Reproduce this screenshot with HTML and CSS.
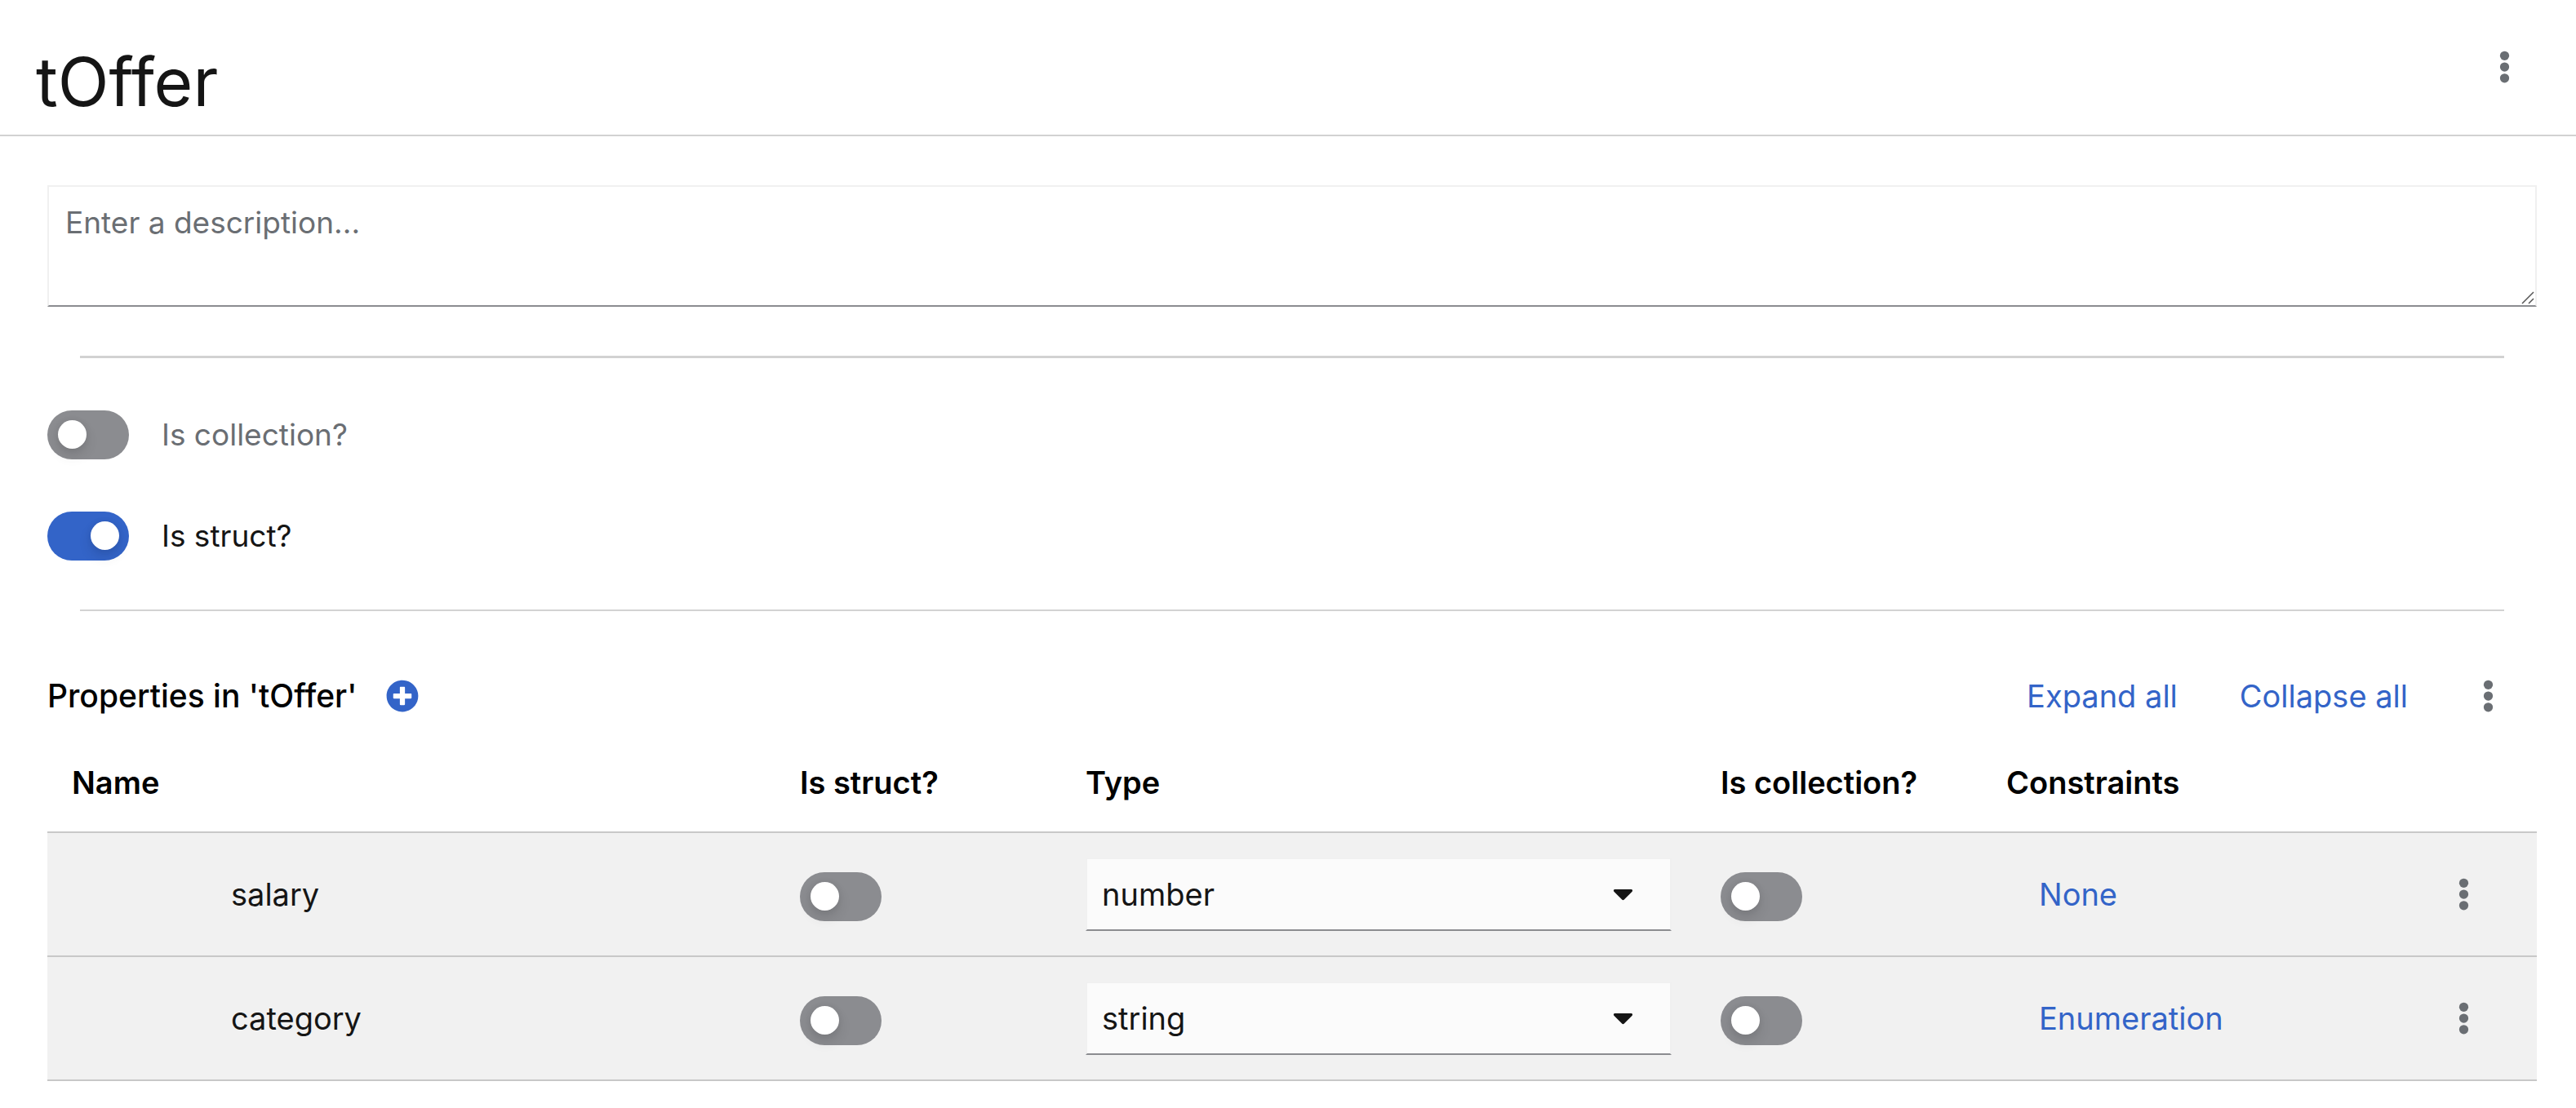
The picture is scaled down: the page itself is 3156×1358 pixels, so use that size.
FILE: index.html
```html
<!DOCTYPE html>
<html lang="en">
<head>
<meta charset="utf-8">
<meta name="viewport" content="width=device-width, initial-scale=1">
<title>tOffer</title>
<link rel="stylesheet" href="styles.css">
</head>
<body>
<svg class="sprite" aria-hidden="true">
  <symbol id="icon-kebab" viewBox="0 0 192 512">
    <circle cx="96" cy="80" r="72"/><circle cx="96" cy="256" r="72"/><circle cx="96" cy="432" r="72"/>
  </symbol>
  <symbol id="icon-caret" viewBox="0 0 320 512">
    <path d="M31.3 192h257.3c17.8 0 26.7 21.5 14.1 34.1L174.1 354.8c-7.8 7.8-20.5 7.8-28.3 0L17.2 226.1C4.6 213.5 13.5 192 31.3 192z"/>
  </symbol>
  <symbol id="icon-plus" viewBox="0 0 512 512">
    <path d="M256 8C119 8 8 119 8 256s111 248 248 248 248-111 248-248S393 8 256 8zm144 276c0 6.600-5.400 12-12 12h-92v92c0 6.600-5.400 12-12 12h-56c-6.600 0-12-5.400-12-12v-92h-92c-6.600 0-12-5.400-12-12v-56c0-6.600 5.400-12 12-12h92v-92c0-6.600 5.400-12 12-12h56c6.600 0 12 5.400 12 12v92h92c6.600 0 12 5.400 12 12v56z"/>
  </symbol>
</svg>

<header class="header">
  <h1 class="title">tOffer</h1>
  <button class="kebab" type="button" aria-label="Data type actions"><svg class="kebab-icon"><use href="#icon-kebab"/></svg></button>
</header>

<main class="content">
  <div class="description">
    <textarea class="description-input" aria-label="Description" placeholder="Enter a description..."></textarea>
    <svg class="grip" viewBox="0 0 16 16" aria-hidden="true"><path d="M1 15L15 1M9 15L15 9"/></svg>
  </div>

  <hr class="divider divider-strong">

  <div class="options">
    <label class="option"><input class="switch" type="checkbox" role="switch"><span>Is collection?</span></label>
    <label class="option"><input class="switch" type="checkbox" role="switch" checked><span>Is struct?</span></label>
  </div>

  <hr class="divider">

  <div class="toolbar">
    <h2 class="toolbar-title">Properties in 'tOffer'</h2>
    <button class="add" type="button" aria-label="Add property"><svg class="add-icon"><use href="#icon-plus"/></svg></button>
    <div class="toolbar-actions">
      <button class="link" type="button">Expand all</button>
      <button class="link" type="button">Collapse all</button>
    </div>
    <button class="kebab" type="button" aria-label="Properties actions"><svg class="kebab-icon"><use href="#icon-kebab"/></svg></button>
  </div>

  <table class="properties">
    <colgroup>
      <col><col class="col-toggle"><col class="col-type"><col class="col-toggle"><col class="col-constraints"><col class="col-actions">
    </colgroup>
    <thead>
      <tr><th>Name</th><th>Is struct?</th><th>Type</th><th>Is collection?</th><th>Constraints</th><td></td></tr>
    </thead>
    <tbody>
      <tr>
        <td class="name">salary</td>
        <td class="toggle"><input class="switch" type="checkbox" role="switch" aria-label="salary is struct"></td>
        <td><div class="select"><select class="select-input" aria-label="salary type"><option>number</option><option>string</option></select><svg class="select-caret"><use href="#icon-caret"/></svg></div></td>
        <td class="toggle"><input class="switch" type="checkbox" role="switch" aria-label="salary is collection"></td>
        <td><button class="link constraint" type="button">None</button></td>
        <td class="actions"><button class="kebab" type="button" aria-label="salary actions"><svg class="kebab-icon"><use href="#icon-kebab"/></svg></button></td>
      </tr>
      <tr>
        <td class="name">category</td>
        <td class="toggle"><input class="switch" type="checkbox" role="switch" aria-label="category is struct"></td>
        <td><div class="select"><select class="select-input" aria-label="category type"><option>string</option><option>number</option></select><svg class="select-caret"><use href="#icon-caret"/></svg></div></td>
        <td class="toggle"><input class="switch" type="checkbox" role="switch" aria-label="category is collection"></td>
        <td><button class="link constraint" type="button">Enumeration</button></td>
        <td class="actions"><button class="kebab" type="button" aria-label="category actions"><svg class="kebab-icon"><use href="#icon-kebab"/></svg></button></td>
      </tr>
    </tbody>
  </table>
</main>
</body>
</html>
```
FILE: styles.css
```css
:root {
  --text: #151515;
  --muted: #6a6e73;
  --gray: #8b8c90;
  --line: #d2d2d2;
  --blue: #3364c8;
}

* { box-sizing: border-box; }

body {
  margin: 0;
  background: #fff;
  color: var(--text);
  font-family: Inter, "Liberation Sans", sans-serif;
  font-size: 38px;
  line-height: 60px;
}

button, textarea, select { font: inherit; color: inherit; }

button {
  padding: 0;
  border: 0;
  background: none;
  cursor: pointer;
}

.sprite { display: none; }

/* Header */
.header {
  display: flex;
  justify-content: space-between;
  align-items: flex-start;
  padding: 49px 48px 12px 44px;
  border-bottom: 2px solid var(--line);
}

.title {
  margin: 0;
  font-size: 82px;
  line-height: 104px;
  font-weight: 400;
}

.kebab {
  display: inline-flex;
  align-items: center;
  justify-content: center;
  width: 80px;
  height: 66px;
}

.kebab-icon {
  width: 15px;
  height: 40px;
  fill: var(--muted);
}

.content { padding: 60px 48px 33px 58px; }

/* Description */
.description {
  position: relative;
  display: flex;
}

.description-input {
  flex: 1;
  height: 149px;
  padding: 14px 20px;
  border: 2px solid #f0f0f0;
  border-bottom-color: var(--gray);
  border-radius: 0;
  background: #fff;
  font-size: 37px;
  resize: vertical;
}

.description-input::placeholder { color: var(--muted); }
.description-input::-webkit-resizer { background: transparent; }

.grip {
  position: absolute;
  right: 3px;
  bottom: 3px;
  width: 16px;
  height: 16px;
  fill: none;
  stroke: #555;
  stroke-width: 1.5;
  pointer-events: none;
}

.divider {
  height: 2px;
  margin: 60px 40px;
  border: 0;
  background: var(--line);
}

.divider-strong { height: 3px; margin-bottom: 64px; }

/* Switches */
.options {
  display: flex;
  flex-direction: column;
  align-items: flex-start;
  gap: 64px;
}

.option {
  display: flex;
  align-items: center;
  gap: 40px;
  font-size: 37px;
  color: var(--muted);
}

.option:has(:checked) { color: var(--text); }

.switch {
  display: block;
  appearance: none;
  width: 100px;
  height: 60px;
  margin: 0;
  padding: 12px 12px 12px 13px;
  border-radius: 30px;
  background: var(--gray);
}

.switch::before {
  content: "";
  display: block;
  width: 35px;
  height: 35px;
  border-radius: 50%;
  background: #fff;
  box-shadow: 0 8px 16px rgba(3, 3, 3, .12), 0 0 8px rgba(3, 3, 3, .06);
}

.switch:checked { background: var(--blue); }
.switch:checked::before { margin-left: auto; }

/* Properties */
.toolbar {
  display: flex;
  align-items: center;
  height: 64px;
  margin-top: 72px;
  padding-right: 20px;
}

.toolbar-title {
  margin: 0 36px 0 0;
  color: #000;
  font-size: 39px;
  font-weight: 500;
}

.add, .add-icon {
  display: block;
  width: 40px;
  height: 40px;
  fill: var(--blue);
}

.toolbar-actions {
  display: flex;
  gap: 76px;
  margin: 0 58px 0 auto;
}

.link { color: var(--blue); }

.properties {
  width: 100%;
  table-layout: fixed;
  border-collapse: separate;
  border-spacing: 0;
}

.col-toggle { width: 350px; }
.col-type { width: 778px; }
.col-constraints { width: 500px; }
.col-actions { width: 180px; }

.properties th, .properties td {
  padding: 0 30px;
  border-bottom: 2px solid #c8c8c8;
  text-align: left;
  vertical-align: middle;
}

.properties th {
  padding-top: 44px;
  padding-bottom: 30px;
  color: #000;
  font-weight: 600;
  white-space: nowrap;
}

.properties tbody td {
  padding-top: 30px;
  padding-bottom: 30px;
  background: #f1f1f1;
}

.properties tbody .name { padding-left: 225px; }
.properties tbody .toggle { padding-bottom: 24px; }
.properties tbody .actions { padding: 0; text-align: center; }
.actions .kebab { vertical-align: middle; }

.select { position: relative; }

.select-input {
  display: block;
  appearance: none;
  width: 100%;
  height: 90px;
  padding: 0 80px 0 18px;
  border: 2px solid #f0f0f0;
  border-bottom-color: var(--gray);
  border-radius: 0;
  background: #fbfbfb;
}

.select-caret {
  position: absolute;
  top: 24px;
  right: 47px;
  width: 25px;
  height: 40px;
  fill: var(--text);
  pointer-events: none;
}

.constraint { margin-left: 40px; }
```
